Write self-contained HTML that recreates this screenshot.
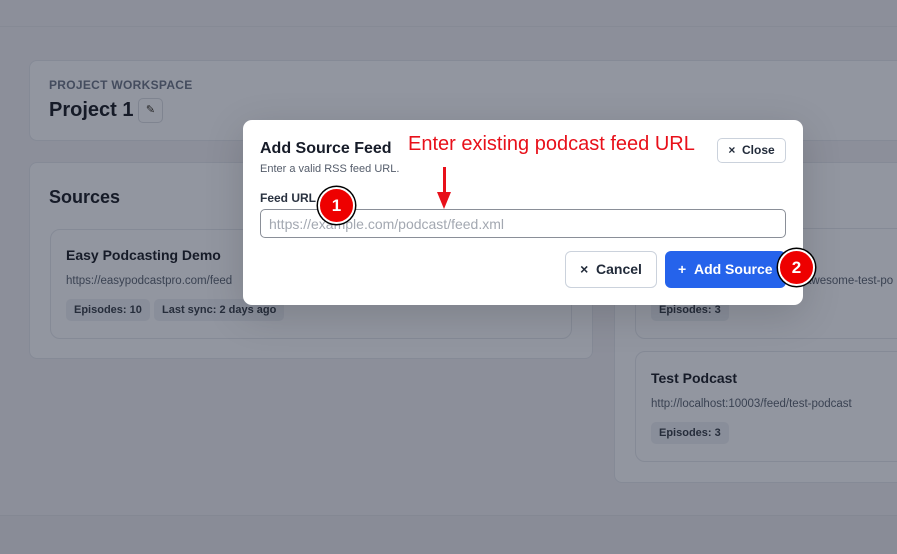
<!DOCTYPE html>
<html><head><style>
*{box-sizing:border-box;margin:0;padding:0}
body{width:897px;height:554px;overflow:hidden;background:#8c8f9a;font-family:"Liberation Sans",sans-serif;position:relative}
.abs{position:absolute}
.card{position:absolute;background:#9296a0;border:1px solid #858a96;border-radius:8px}
.chip{position:absolute;background:#898e9a;border-radius:5px;font-size:11px;font-weight:bold;color:#262d3b;padding:5px 8px}
.t{color:#161b28}
.badge{position:absolute;width:37px;height:37px;border-radius:50%;background:#e00;border:2px solid #fff;box-shadow:0 0 0 1.5px #000;color:#fff;font-weight:bold;font-size:17px;text-align:center;line-height:33px}
</style></head><body>
<div class="abs" style="left:0;top:26px;width:897px;height:1px;background:#868a95"></div>
<div class="abs" style="left:0;top:515px;width:897px;height:39px;background:#898c97;border-top:1px solid #848893"></div>

<div class="card" style="left:29px;top:60px;width:880px;height:81px"></div>
<div class="abs" style="left:49px;top:78px;font-size:12px;font-weight:bold;color:#444c5e;letter-spacing:.3px">PROJECT WORKSPACE</div>
<div class="abs t" style="left:49px;top:99px;font-size:20px;font-weight:bold">Project 1</div>
<div class="abs" style="left:138px;top:98px;width:25px;height:25px;border:1px solid #7f8490;border-radius:5px;font-size:11px;text-align:center;line-height:23px;color:#222">✎</div>

<div class="card" style="left:29px;top:162px;width:564px;height:197px"></div>
<div class="abs t" style="left:49px;top:187px;font-size:18px;font-weight:bold">Sources</div>
<div class="card" style="left:50px;top:229px;width:522px;height:110px;border-radius:10px"></div>
<div class="abs t" style="left:66px;top:247px;font-size:14px;font-weight:bold">Easy Podcasting Demo</div>
<div class="abs" style="left:66px;top:275px;font-size:11.5px;color:#3a4252">https://easypodcastpro.com/feed</div>
<div class="chip" style="left:66px;top:299px">Episodes: 10</div>
<div class="chip" style="left:154px;top:299px">Last sync: 2 days ago</div>

<div class="card" style="left:614px;top:162px;width:300px;height:321px"></div>
<div class="card" style="left:635px;top:228px;width:280px;height:111px;border-radius:10px"></div>
<div class="abs" style="left:805px;top:275px;font-size:11.5px;color:#3a4252">awesome-test-po</div>
<div class="chip" style="left:651px;top:299px">Episodes: 3</div>
<div class="card" style="left:635px;top:351px;width:280px;height:111px;border-radius:10px"></div>
<div class="abs t" style="left:651px;top:370px;font-size:14px;font-weight:bold">Test Podcast</div>
<div class="abs" style="left:651px;top:398px;font-size:11.5px;color:#3a4252">http://localhost:10003/feed/test-podcast</div>
<div class="chip" style="left:651px;top:422px">Episodes: 3</div>

<div class="abs" style="left:243px;top:120px;width:560px;height:185px;background:#fff;border-radius:9px;box-shadow:0 10px 40px rgba(0,0,0,.15)"></div>
<div class="abs t" style="left:260px;top:140px;font-size:16px;font-weight:bold">Add Source Feed</div>
<div class="abs" style="left:260px;top:163px;font-size:11px;color:#555d6b">Enter a valid RSS feed URL.</div>
<div class="abs" style="left:408px;top:133px;font-size:20px;color:#e8101a">Enter existing podcast feed URL</div>
<div class="abs" style="left:717px;top:138px;width:69px;height:25px;border:1px solid #cbd2dc;border-radius:5px;font-size:12px;font-weight:bold;color:#222b3a;line-height:23px;text-align:center">×&nbsp;&nbsp;Close</div>
<div class="abs" style="left:443px;top:167px;width:3px;height:30px;background:#e8101a"></div>
<div class="abs" style="left:437px;top:192px;width:0;height:0;border-left:7.5px solid transparent;border-right:7.5px solid transparent;border-top:17px solid #e8101a"></div>
<div class="abs t" style="left:260px;top:191px;font-size:12px;font-weight:bold;color:#2a3240">Feed URL</div>
<div class="abs" style="left:260px;top:209px;width:526px;height:29px;border:1px solid #8a8f98;border-radius:5px;font-size:14px;color:#a3a8b1;padding:6px 8px">https://example.com/podcast/feed.xml</div>
<div class="badge" style="left:318px;top:187px">1</div>
<div class="abs" style="left:565px;top:251px;width:92px;height:37px;border:1px solid #cbd2dc;border-radius:6px;font-size:14px;font-weight:bold;color:#222b3a;line-height:35px;text-align:center">×&nbsp;&nbsp;Cancel</div>
<div class="abs" style="left:665px;top:251px;width:121px;height:37px;background:#2563eb;border-radius:6px;font-size:14px;font-weight:bold;color:#fff;line-height:37px;padding-left:13px">+&nbsp;&nbsp;Add Source</div>
<div class="badge" style="left:778px;top:249px">2</div>
</body></html>
